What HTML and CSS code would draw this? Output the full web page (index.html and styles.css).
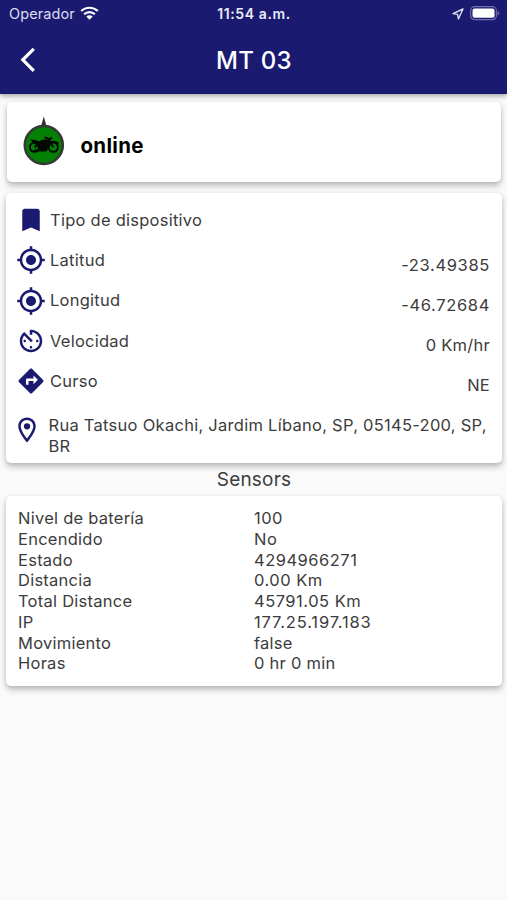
FILE: index.html
```html
<!DOCTYPE html>
<html lang="es">
<head>
<meta charset="utf-8">
<meta name="viewport" content="width=device-width, initial-scale=1">
<title>MT 03</title>
<link rel="stylesheet" href="styles.css">
</head>
<body>
<header class="header">
  <div class="status">
    <div class="carrier"><span>Operador</span>
      <svg class="wifi" viewBox="0 0 19 14"><path fill="none" stroke="currentColor" stroke-width="2.1" d="M1.2 5.1a11.8 11.8 0 0 1 16.6 0M4.1 8.3a7.7 7.7 0 0 1 10.8 0"/><path fill="currentColor" d="M6.3 10.5a4.5 4.5 0 0 1 6.4 0L9.5 13.7z"/></svg>
    </div>
    <div class="time">11:54 a.m.</div>
    <div class="indicators">
      <svg class="arrow" viewBox="0 0 12 12"><path fill="none" stroke="currentColor" stroke-width="1.4" stroke-linejoin="round" d="M11 1 1 5.6l4.6.8.8 4.6z"/></svg>
      <svg class="battery" viewBox="0 0 31 15"><rect x=".7" y=".7" width="26.6" height="13.4" rx="4" fill="none" stroke="#6f6dab" stroke-width="1.2"/><rect x="2.6" y="2.6" width="22.8" height="9.6" rx="2.2" fill="#fff"/><path d="M28.7 5v4.8q1.5-.8 1.5-2.4T28.7 5" fill="#6f6dab"/></svg>
    </div>
  </div>
  <div class="toolbar">
    <svg class="back" viewBox="0 0 16 26"><path fill="none" stroke="currentColor" stroke-width="3.2" d="M13.8 1.8 2.8 12.8l11 11"/></svg>
    <h1>MT 03</h1>
  </div>
</header>
<main>
  <section class="card device">
    <svg class="marker" viewBox="0 0 42 50"><path d="M17.500 12 20.800.5 24.100 12z" fill="#333"/><circle cx="20.800" cy="29" r="19" fill="#048004" stroke="#353a35" stroke-width="2.600"/><g fill="none" stroke="#030803" stroke-width="2"><circle cx="11.500" cy="31.200" r="4.600"/><circle cx="30.300" cy="31.200" r="4.600"/><path d="m11.500 31.200 5-4M30.300 31.200l-5.600-9-3.200-.6M11 34.500h12l3-7.500M26 24l3-2.500M26 26.500q6-2 9.500 1"/></g><path fill="#030803" d="M7 23.500q5.500 0 9 1.700 3.500-2.200 7.500-1.700l4 1.500-1 4-3.500 6h-7l-2-5-3.500-3z"/></svg>
    <strong>online</strong>
  </section>
  <section class="card details">
    <div class="row"><svg class="icon" viewBox="0 0 24 24"><path d="M17 3H7c-1.100 0-1.990.9-1.990 2L5 21l7-3 7 3V5c0-1.100-.9-2-2-2z"/></svg><span>Tipo de dispositivo</span></div>
    <div class="row"><svg class="icon" viewBox="0 0 24 24"><path d="M12 8c-2.210 0-4 1.790-4 4s1.790 4 4 4 4-1.790 4-4-1.790-4-4-4zm8.940 3c-.46-4.170-3.770-7.480-7.940-7.940V1h-2v2.060C6.830 3.520 3.520 6.830 3.060 11H1v2h2.060c.46 4.170 3.770 7.480 7.940 7.940V23h2v-2.060c4.170-.46 7.480-3.770 7.940-7.940H23v-2h-2.060zM12 19c-3.870 0-7-3.130-7-7s3.130-7 7-7 7 3.130 7 7-3.130 7-7 7z"/></svg><span>Latitud</span><span class="value number">-23.49385</span></div>
    <div class="row"><svg class="icon" viewBox="0 0 24 24"><path d="M12 8c-2.210 0-4 1.790-4 4s1.790 4 4 4 4-1.790 4-4-1.790-4-4-4zm8.940 3c-.46-4.170-3.770-7.480-7.940-7.940V1h-2v2.060C6.830 3.520 3.520 6.830 3.060 11H1v2h2.060c.46 4.170 3.770 7.480 7.940 7.940V23h2v-2.060c4.170-.46 7.480-3.770 7.940-7.940H23v-2h-2.060zM12 19c-3.870 0-7-3.130-7-7s3.130-7 7-7 7 3.130 7 7-3.130 7-7 7z"/></svg><span>Longitud</span><span class="value number">-46.72684</span></div>
    <div class="row"><svg class="icon" viewBox="0 0 24 24"><path d="M11 17c0 .55.45 1 1 1s1-.45 1-1-.45-1-1-1-1 .45-1 1zm0-14v4h2V5.080c3.390.49 6 3.390 6 6.920 0 3.870-3.130 7-7 7s-7-3.130-7-7c0-1.680.59-3.220 1.580-4.420L12 13l1.410-1.410-6.800-6.800v.02C4.420 6.450 3 9.050 3 12c0 4.970 4.020 9 9 9 4.970 0 9-4.030 9-9s-4.030-9-9-9h-1zm7 9c0-.55-.45-1-1-1s-1 .45-1 1 .45 1 1 1 1-.45 1-1zM6 12c0 .55.45 1 1 1s1-.45 1-1-.45-1-1-1-1 .45-1 1z"/></svg><span>Velocidad</span><span class="value">0 Km/hr</span></div>
    <div class="row"><svg class="icon" viewBox="0 0 24 24"><path d="m21.710 11.290-9-9c-.39-.39-1.020-.39-1.410 0l-9 9c-.39.39-.39 1.020 0 1.410l9 9c.39.39 1.020.39 1.410 0l9-9c.39-.38.39-1.010 0-1.410zM14 14.500V12h-4v3H8v-4c0-.55.45-1 1-1h5V7.500l3.500 3.500-3.500 3.500z"/></svg><span>Curso</span><span class="value">NE</span></div>
    <div class="address"><svg class="icon" viewBox="0 0 24 24"><path d="M12 2C8.130 2 5 5.130 5 9c0 5.250 7 13 7 13s7-7.750 7-13c0-3.870-3.130-7-7-7zM7 9c0-2.760 2.240-5 5-5s5 2.240 5 5c0 2.880-2.880 7.190-5 9.880C9.920 16.210 7 11.850 7 9z"/><circle cx="12" cy="9" r="2.500"/></svg><p>Rua Tatsuo Okachi, Jardim Líbano, SP, 05145-200, SP, BR</p></div>
  </section>
  <h2>Sensors</h2>
  <dl class="card sensors">
    <dt>Nivel de batería</dt><dd>100</dd>
    <dt>Encendido</dt><dd>No</dd>
    <dt>Estado</dt><dd>4294966271</dd>
    <dt>Distancia</dt><dd>0.00 Km</dd>
    <dt>Total Distance</dt><dd>45791.05 Km</dd>
    <dt>IP</dt><dd class="ip">177.25.197.183</dd>
    <dt>Movimiento</dt><dd class="word">false</dd>
    <dt>Horas</dt><dd class="word">0 hr 0 min</dd>
  </dl>
</main>
</body>
</html>
```
FILE: styles.css
```css
* { box-sizing: border-box; }
body { margin: 0; min-height: 900px; background: #fafafa; color: #3c3c3c; font: 16.5px/20.75px Inter, sans-serif; letter-spacing: .25px; }
h1, h2, p, dl, dd { margin: 0; }
svg { display: block; flex: none; }
.header { height: 93.5px; background: #1a1a70; color: #fff; box-shadow: 0 2px 5px rgba(0,0,0,.35); }
.status { height: 28px; padding: 0 7px 0 9px; display: grid; grid-template-columns: 1fr auto 1fr; align-items: center; font-size: 14.5px; letter-spacing: .1px; }
.carrier { display: flex; align-items: center; gap: 5px; color: #dddcf0; }
.wifi { width: 19px; height: 14px; margin-top: -2px; color: #fff; }
.time { font-weight: 600; font-size: 14px; letter-spacing: .6px; color: #ebeaf7; margin-right: 1px; }
.indicators { display: flex; justify-content: flex-end; align-items: center; gap: 6px; color: #dddcf0; margin-top: -1px; }
.arrow { width: 12px; height: 12px; }
.battery { width: 30px; height: 14.5px; }
.toolbar { height: 64px; display: grid; grid-template-columns: 1fr auto 1fr; align-items: center; padding: 0 20px; }
.back { width: 16px; height: 26px; }
h1 { font-size: 24px; line-height: 30px; font-weight: 500; letter-spacing: .25px; margin: 1px -1px 0 0; }
main { padding: 8px 5px 0 6px; }
.card { background: #fff; border-radius: 5px; box-shadow: 0 4px 6px rgba(0,0,0,.22), 0 1px 4px rgba(0,0,0,.1); }
.device { height: 80px; margin: 0 1px 11.5px 1px; padding: 0 15px 0 16px; display: flex; align-items: center; gap: 15.5px; }
.marker { width: 42px; height: 50px; margin-top: -1px; }
.device strong { color: #000; font-size: 20.5px; line-height: 26px; letter-spacing: .3px; margin-top: 8px; }
.details { height: 270px; padding: 7px 12px 0 10px; }
.row { height: 40.3px; display: flex; align-items: center; gap: 4px; }
.icon { width: 30px; height: 30px; fill: #1a1a70; }
.value { margin-left: auto; padding-top: 9px; }
.number { letter-spacing: .65px; }
.address { display: flex; align-items: flex-start; gap: 6.5px; margin: 13.5px -3px 0 -4px; }
.address p { flex: 1; letter-spacing: .27px; }
h2 { text-align: center; font-size: 19px; line-height: 33px; font-weight: 400; letter-spacing: .2px; }
.sensors { height: 190px; padding: 12px; display: grid; grid-template-columns: 1fr 1fr; grid-auto-rows: 20.75px; }
.sensors dd { letter-spacing: .5px; }
.sensors .ip { letter-spacing: .85px; }
.sensors .word { letter-spacing: .25px; }
```
